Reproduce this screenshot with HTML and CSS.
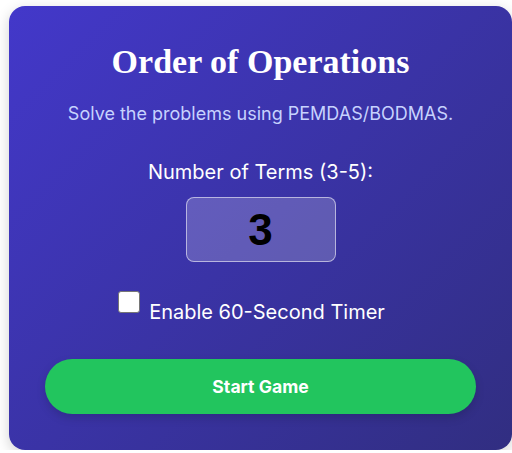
FILE: index.html
```html
<!DOCTYPE html>
<html lang="en">
<head>
<meta charset="utf-8">
<title>Order of Operations</title>
<link rel="stylesheet" href="styles.css">
</head>
<body>
<div class="card">
  <h1 class="title">Order of Operations</h1>
  <p class="subtitle">Solve the problems using PEMDAS/BODMAS.</p>
  <label class="field-label" for="terms">Number of Terms (3-5):</label>
  <input class="terms-input" id="terms" type="text" value="3">
  <div class="timer-row">
    <span class="checkbox"></span>
    <span class="timer-text">Enable 60-Second Timer</span>
  </div>
  <button class="start-btn" type="button">Start Game</button>
</div>
</body>
</html>
```

FILE: styles.css
```css
* { box-sizing: border-box; }
html, body { margin: 0; padding: 0; background: #ffffff; }
body { font-family: Inter, "Noto Sans", sans-serif; }
.card {
  margin: 6px 0 0 9px;
  width: 503px;
  border-radius: 16px;
  background: linear-gradient(135deg, #4338ca 0%, #312e81 100%);
  box-shadow: 0 4px 14px rgba(0, 0, 0, 0.18);
  padding: 36px 36px 36px;
  display: flex;
  flex-direction: column;
  align-items: center;
  color: #ffffff;
}
.card > * { flex-shrink: 0; }
.title {
  margin: 0;
  font-family: "Liberation Serif", "Times New Roman", serif;
  font-weight: 700;
  font-size: 34px;
  line-height: 40px;
}
.subtitle {
  margin: 20px 0 0;
  font-size: 18px;
  line-height: 24px;
  color: #c7d2fe;
}
.field-label {
  margin-top: 34px;
  font-size: 20px;
  line-height: 24px;
}
.terms-input {
  margin-top: 13px;
  width: 150px;
  height: 65px;
  border: 1px solid rgba(255, 255, 255, 0.55);
  border-radius: 8px;
  background: rgba(255, 255, 255, 0.2);
  text-align: center;
  font-family: "Liberation Sans", Arial, sans-serif;
  font-weight: 700;
  font-size: 44px;
  color: #000000;
  padding: 0;
  outline: none;
}
.timer-row {
  margin-top: 29px;
  padding-right: 18px;
  display: flex;
  align-items: flex-start;
  gap: 9px;
}
.checkbox {
  width: 22px;
  height: 22px;
  background: #ffffff;
  border: 1px solid #767676;
  border-radius: 3px;
}
.timer-text {
  margin-top: 9px;
  font-size: 20px;
  line-height: 24px;
}
.start-btn {
  margin-top: 35px;
  width: 100%;
  height: 55px;
  border: none;
  border-radius: 28px;
  background: #22c55e;
  color: #ffffff;
  font-family: Inter, "Noto Sans", sans-serif;
  font-weight: 700;
  font-size: 17.6px;
  box-shadow: 0 4px 10px rgba(0, 0, 0, 0.15);
}
```
